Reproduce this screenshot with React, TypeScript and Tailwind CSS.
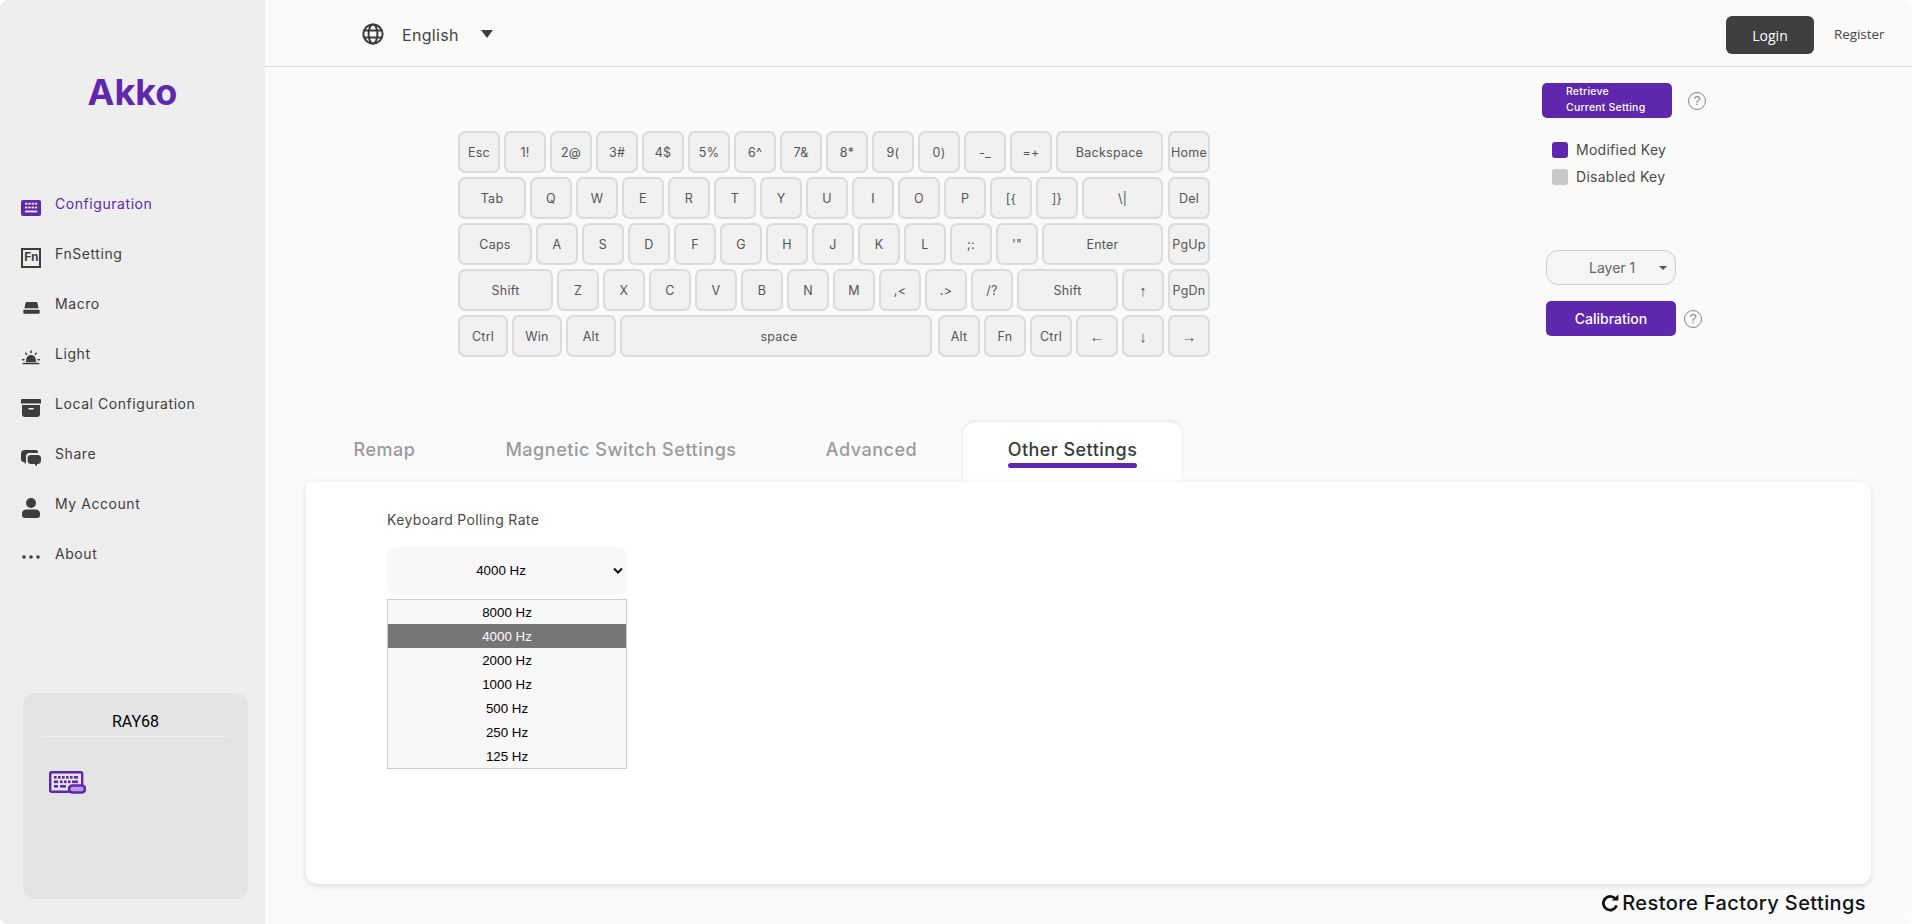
import { ReactNode } from "react";

const sans = "font-['Inter','Liberation_Sans',sans-serif]";
const purple = "#5e27ad";

type KeyDef = { label: string; w?: number; ml?: number; pl?: number };

const row1: KeyDef[] = [
  { label: "Esc" }, { label: "1!" }, { label: "2@" }, { label: "3#" }, { label: "4$" }, { label: "5%" }, { label: "6^" },
  { label: "7&" }, { label: "8*" }, { label: "9(" }, { label: "0)" }, { label: "-_" }, { label: "=+" },
  { label: "Backspace", w: 107 },
];
const row2: KeyDef[] = [
  { label: "Tab", w: 68 }, { label: "Q" }, { label: "W" }, { label: "E" }, { label: "R" }, { label: "T" }, { label: "Y" },
  { label: "U" }, { label: "I" }, { label: "O" }, { label: "P" }, { label: "[{" }, { label: "]}" }, { label: "\\|", w: 81 },
];
const row3: KeyDef[] = [
  { label: "Caps", w: 74 }, { label: "A" }, { label: "S" }, { label: "D" }, { label: "F" }, { label: "G" }, { label: "H" },
  { label: "J" }, { label: "K" }, { label: "L" }, { label: ";:" }, { label: "'\"" }, { label: "Enter", w: 121 },
];
const row4: KeyDef[] = [
  { label: "Shift", w: 95 }, { label: "Z" }, { label: "X" }, { label: "C" }, { label: "V" }, { label: "B" }, { label: "N" },
  { label: "M" }, { label: ",<" }, { label: ".>" }, { label: "/?" }, { label: "Shift", w: 101 }, { label: "↑" },
];
const row5: KeyDef[] = [
  { label: "Ctrl", w: 50 }, { label: "Win", w: 50 }, { label: "Alt", w: 50 }, { label: "space", w: 312, pl: 6 }, { label: "Alt", ml: 2 },
  { label: "Fn" }, { label: "Ctrl" }, { label: "←" }, { label: "↓" },
];
const endKeys = ["Home", "Del", "PgUp", "PgDn", "→"];
const arrows = ["↑", "↓", "←", "→"];

const Key = ({ k }: { k: KeyDef }) => (
  <div
    className={`h-[42px] shrink-0 flex items-center justify-center pt-[2px] rounded-[7px] border-2 border-[#dcdcdc] bg-[#f1f1f1] text-[#555555] whitespace-nowrap ${
      arrows.includes(k.label) ? "text-[15px] font-['Liberation_Sans',sans-serif]" : "text-[12.5px] tracking-[0.02em]"
    }`}
    style={{ width: k.w ?? 42, marginLeft: k.ml, paddingLeft: k.pl }}
  >
    {k.label}
  </div>
);

const Keyboard = () => {
  const rows = [row1, row2, row3, row4, row5];
  return (
    <div className={`mt-[64px] w-[752px] flex flex-col gap-[4px] ${sans}`}>
      {rows.map((r, i) => (
        <div key={i} className="flex justify-between">
          <div className="flex gap-[4px]">
            {r.map((k, j) => (
              <Key key={j} k={k} />
            ))}
          </div>
          <Key k={{ label: endKeys[i] }} />
        </div>
      ))}
    </div>
  );
};

const KeyboardIcon = () => (
  <svg width="20" height="16" viewBox="0 0 20 16">
    <rect width="20" height="16" rx="2" fill={purple} />
    <g fill="#eeeeee">
      <rect x="4" y="2.8" width="2.4" height="1.8" /><rect x="7.3" y="2.8" width="2.4" height="1.8" /><rect x="10.6" y="2.8" width="2.4" height="1.8" /><rect x="13.8" y="2.8" width="2.4" height="1.8" />
      <rect x="4" y="6.6" width="2.4" height="1.8" /><rect x="7.3" y="6.6" width="2.4" height="1.8" /><rect x="10.6" y="6.6" width="2.4" height="1.8" /><rect x="13.8" y="6.6" width="2.4" height="1.8" />
      <rect x="4" y="10.6" width="12.2" height="1.8" />
    </g>
  </svg>
);

const FnIcon = () => (
  <div className="w-[20px] h-[20px] border-2 border-[#3d3d3d] flex items-center justify-center text-[12.5px] tracking-[-0.04em] font-bold leading-none text-[#3d3d3d] font-['Liberation_Mono',monospace]">
    Fn
  </div>
);

const MacroIcon = () => (
  <svg width="17" height="12" viewBox="0 0 20 14" fill="#3d3d3d" preserveAspectRatio="none">
    <path d="M4.6 0H15.4Q16.6 0 17 1.2L18.3 7.4H1.7L3 1.2Q3.4 0 4.6 0Z" />
    <path d="M1.2 9H18.8Q19.6 9 19.6 10V12.4Q19.6 13.6 18.4 13.6H1.6Q.4 13.6 .4 12.4V10Q.4 9 1.2 9Z" />
  </svg>
);

const LightIcon = () => (
  <svg width="20" height="15" viewBox="0 0 20 16" fill="#3d3d3d">
    <path d="M4.8 13V10.5A5.2 5.2 0 0 1 15.2 10.5V13Z" />
    <rect x="1" y="13.6" width="18" height="1.6" rx=".6" />
    <rect x="9.2" y="0.4" width="1.6" height="3" />
    <path d="M3.4 3.2l1.2-.9 1.7 2.3-1.2.9zM16.6 3.2l-1.2-.9-1.7 2.3 1.2.9z" />
    <rect x="0.4" y="9.6" width="2.8" height="1.5" />
    <rect x="16.8" y="9.6" width="2.8" height="1.5" />
  </svg>
);

const ArchiveIcon = () => (
  <svg width="20" height="18" viewBox="0 0 20 18" fill="#3d3d3d">
    <path d="M1 0H19Q20 0 20 1V4.5H0V1Q0 0 1 0Z" />
    <path fillRule="evenodd" d="M1 6H19V15.6Q19 18 16.6 18H3.4Q1 18 1 15.6ZM7.4 9V10.6H12.6V9Z" />
  </svg>
);

const ShareIcon = () => (
  <svg width="20" height="18" viewBox="0 0 20 18" fill="#3d3d3d">
    <path d="M4 0H15Q17 0 17 2V3H8.5Q5 3 5 6.5V12.4L3.6 14.2V12H3Q0 12 0 9V4Q0 0 4 0Z" />
    <path d="M10 5H16.6Q20 5 20 8.4V10.6Q20 14 16.6 14H16V16.6L13.4 14H10Q6.6 14 6.6 10.6V8.4Q6.6 5 10 5Z" />
  </svg>
);

const AccountIcon = () => (
  <svg width="20" height="20" viewBox="0 0 20 20" fill="#3d3d3d">
    <circle cx="10" cy="5" r="5" />
    <path d="M5.5 11.4H14.5Q19 11.4 19 16V17Q19 20 16 20H4Q1 20 1 17V16Q1 11.4 5.5 11.4Z" />
  </svg>
);

const DotsIcon = () => (
  <svg width="20" height="4" viewBox="0 0 20 4" fill="#3d3d3d">
    <circle cx="3" cy="2" r="1.8" />
    <circle cx="10" cy="2" r="1.8" />
    <circle cx="17" cy="2" r="1.8" />
  </svg>
);

const navItems: { label: string; icon: ReactNode; top: string; active?: boolean }[] = [
  { label: "Configuration", icon: <KeyboardIcon />, top: "pt-[21px]", active: true },
  { label: "FnSetting", icon: <FnIcon />, top: "pt-[19px]" },
  { label: "Macro", icon: <MacroIcon />, top: "pt-[23px]" },
  { label: "Light", icon: <LightIcon />, top: "pt-[21px]" },
  { label: "Local Configuration", icon: <ArchiveIcon />, top: "pt-[20px]" },
  { label: "Share", icon: <ShareIcon />, top: "pt-[21px]" },
  { label: "My Account", icon: <AccountIcon />, top: "pt-[19px]" },
  { label: "About", icon: <DotsIcon />, top: "pt-[26px]" },
];

const Sidebar = () => (
  <aside className={`w-[265px] shrink-0 h-full bg-[#eeeeee] flex flex-col ${sans}`}>
    <div className="h-[179px] pt-[69px] text-center text-[36px] leading-[46px] font-bold text-[#5e27ad]">
      Akko
    </div>
    <nav className="flex flex-col">
      {navItems.map((n) => (
        <div key={n.label} className="h-[50px] flex pl-[21px]">
          <div className={`w-[34px] h-[50px] flex justify-start items-start ${n.top}`}>
            <div className="w-[20px] flex justify-center">{n.icon}</div>
          </div>
          <span className={`text-[14px] leading-[50px] tracking-[0.04em] ${n.active ? "text-[#5e27ad]" : "text-[#3d3d3d]"}`}>
            {n.label}
          </span>
        </div>
      ))}
    </nav>
    <div className="ml-[23px] mt-[114px] w-[225px] h-[206px] rounded-[12px] bg-[#e4e4e4] px-[18px]">
      <div className="h-[44px] border-b border-[#eeeeee] text-center text-[16px] leading-[58px] text-black font-['Roboto',sans-serif]">
        RAY68
      </div>
      <div className="pl-[8px] pt-[34px]">
        <svg width="37" height="23" viewBox="0 0 37 23" fill="none">
          <rect x="1.2" y="1.2" width="32" height="19.6" rx="1.5" stroke={purple} strokeWidth="2.4" />
          <g fill={purple}>
            <rect x="5" y="5" width="2.6" height="2.6" /><rect x="9" y="5" width="2.6" height="2.6" /><rect x="13" y="5" width="2.6" height="2.6" /><rect x="17" y="5" width="2.6" height="2.6" /><rect x="21" y="5" width="2.6" height="2.6" /><rect x="25" y="5" width="4" height="2.6" />
            <rect x="5" y="9.5" width="4" height="2.6" /><rect x="11" y="9.5" width="2.6" height="2.6" /><rect x="15" y="9.5" width="2.6" height="2.6" /><rect x="19" y="9.5" width="2.6" height="2.6" /><rect x="23" y="9.5" width="6" height="2.6" />
            <rect x="5" y="14" width="4" height="2.6" /><rect x="11" y="14" width="6" height="2.6" />
          </g>
          <rect x="20" y="14.5" width="16" height="7" rx="3.5" fill="#b39ddb" stroke={purple} strokeWidth="2.6" />
        </svg>
      </div>
    </div>
  </aside>
);

const Header = () => (
  <header className="h-[67px] shrink-0 border-b border-[#d9d9d9] flex items-center pt-[4px] pl-[97px] pr-[29px]">
    <svg className="-mt-[3px]" width="22" height="22" viewBox="0 0 22 22" fill="none" stroke="#3d3d3d" strokeWidth="2">
      <circle cx="11" cy="11" r="9.6" />
      <ellipse cx="11" cy="11" rx="4.4" ry="9.6" />
      <path d="M2 7.6H20M2 14.4H20" />
    </svg>
    <span className={`ml-[18px] text-[16px] tracking-[0.02em] text-[#444444] ${sans}`}>English</span>
    <div className="ml-[22px] -mt-[2px] w-0 h-0 border-l-[6.5px] border-r-[6.5px] border-t-[8px] border-l-transparent border-r-transparent border-t-[#3d3d3d]" />
    <div className="ml-auto w-[88px] h-[38px] rounded-[6px] bg-[#3f3f3f] flex items-center justify-center text-[14px] text-white font-['Open_Sans',sans-serif]">
      Login
    </div>
    <span className="ml-[20px] w-[49px] whitespace-nowrap text-[13.33px] text-[#444444] font-['Open_Sans',sans-serif]">Register</span>
  </header>
);

const Help = () => (
  <div className="w-[18px] h-[18px] rounded-full border border-[#888888] flex items-center justify-center text-[13px] leading-none text-[#888888] font-['Liberation_Sans',sans-serif]">
    ?
  </div>
);

const SidePanel = () => (
  <div className={`ml-[332px] mt-[16px] w-[170px] ${sans}`}>
    <div className="flex items-center gap-[16px]">
      <div className="w-[130px] h-[35px] rounded-[5px] bg-[#5e27ad] pl-[24px] text-[10.5px] leading-[16px] pt-[1px] font-medium tracking-[0.02em] text-white">
        Retrieve
        <br />
        Current Setting
      </div>
      <Help />
    </div>
    <div className="ml-[10px] mt-[24px] flex items-center gap-[8px] text-[14px] leading-[16px] tracking-[0.02em] text-[#4a4a4a]">
      <div className="w-[16px] h-[16px] rounded-[3px] bg-[#5e27ad]" />
      Modified Key
    </div>
    <div className="ml-[10px] mt-[11px] flex items-center gap-[8px] text-[14px] leading-[16px] tracking-[0.02em] text-[#4a4a4a]">
      <div className="w-[16px] h-[16px] rounded-[3px] bg-[#c8c8c8]" />
      Disabled Key
    </div>
    <div className="ml-[4px] mt-[65px] w-[130px] h-[35px] rounded-[12px] border border-[#cccccc] bg-[#f5f5f5] flex items-center pl-[42px] text-[14px] text-[#666666]">
      Layer 1
      <div className="ml-auto mr-[8px] w-0 h-0 border-l-[4px] border-r-[4px] border-t-[4px] border-l-transparent border-r-transparent border-t-[#555555]" />
    </div>
    <div className="ml-[4px] mt-[16px] flex items-center gap-[8px]">
      <div className="w-[130px] h-[35px] rounded-[5px] bg-[#5e27ad] flex items-center justify-center text-[14px] font-medium text-white">
        Calibration
      </div>
      <Help />
    </div>
  </div>
);

const tabs = [
  { label: "Remap", w: 155 },
  { label: "Magnetic Switch Settings", w: 318 },
  { label: "Advanced", w: 183 },
];

const Tabs = () => (
  <div className={`ml-[42px] h-[60px] flex ${sans}`}>
    {tabs.map((t) => (
      <div key={t.label} className="h-[60px] pt-[15px] text-center text-[18px] leading-[26px] font-medium tracking-[0.03em] text-[#9a9a9a]" style={{ width: t.w }}>
        {t.label}
      </div>
    ))}
    <div className="w-[219px] h-[60px] pt-[15px] rounded-t-[12px] bg-white shadow-[0_-1px_3px_rgba(0,0,0,0.1)] flex flex-col items-center text-[18px] leading-[26px] font-medium tracking-[0.025em] text-[#3a3a3a]">
      Other Settings
      <div className="w-[129px] h-[5px] rounded-full bg-[#5e27ad]" />
    </div>
  </div>
);

const rates = ["8000 Hz", "4000 Hz", "2000 Hz", "1000 Hz", "500 Hz", "250 Hz", "125 Hz"];

const Panel = () => (
  <section className="ml-[41px] w-[1565px] h-[402px] rounded-[12px] rounded-tl-[4px] bg-white shadow-[0_2px_6px_rgba(0,0,0,0.12)] pl-[81px] pt-[28px]">
    <div className={`text-[14px] leading-[20px] tracking-[0.025em] text-[#4a4a4a] ${sans}`}>Keyboard Polling Rate</div>
    <div className="w-[240px] mt-[17px] font-['Liberation_Sans',sans-serif] text-[13.33px]">
      <div className="h-[48px] rounded-[8px] bg-[#f8f8f8] flex items-center relative text-black">
        <span className="w-[228px] text-center">4000 Hz</span>
        <svg className="absolute right-[4px] top-[19px]" width="10" height="10" viewBox="0 0 10 10" fill="none" stroke="#111111" strokeWidth="2">
          <path d="M1 2.5L5 6.5L9 2.5" />
        </svg>
      </div>
      <ul className="mt-[4px] h-[170px] border border-[#cccccc] bg-[#f8f8f8]">
        {rates.map((r) => (
          <li key={r} className={`h-[24px] leading-[26px] text-center ${r === "4000 Hz" ? "bg-[#767676] text-white" : "text-black"}`}>
            {r}
          </li>
        ))}
      </ul>
    </div>
  </section>
);

const Restore = () => (
  <div className={`w-[1601px] flex justify-end items-center h-[38px] gap-[3px] ${sans}`}>
    <svg width="18" height="18" viewBox="0 0 18 18" fill="none" stroke="#111111" strokeWidth="2.8">
      <path d="M14.6 5.2A6.8 6.8 0 1 0 15.6 11.4" />
      <path d="M10.8 6.6H17.4V0.6Z" fill="#111111" stroke="none" />
    </svg>
    <span className="text-[20px] font-medium tracking-[0.02em] text-[#111111]">Restore Factory Settings</span>
  </div>
);

export default function App() {
  return (
    <div className="w-[1912px] h-[924px] bg-white overflow-hidden">
      <div className="w-full h-full rounded-[8px] overflow-hidden flex bg-[#fafafa]">
        <Sidebar />
        <main className="flex-1 flex flex-col min-w-0">
          <Header />
          <div className="h-[355px] pl-[193px] flex items-start">
            <Keyboard />
            <SidePanel />
          </div>
          <Tabs />
          <Panel />
          <Restore />
        </main>
      </div>
    </div>
  );
}
